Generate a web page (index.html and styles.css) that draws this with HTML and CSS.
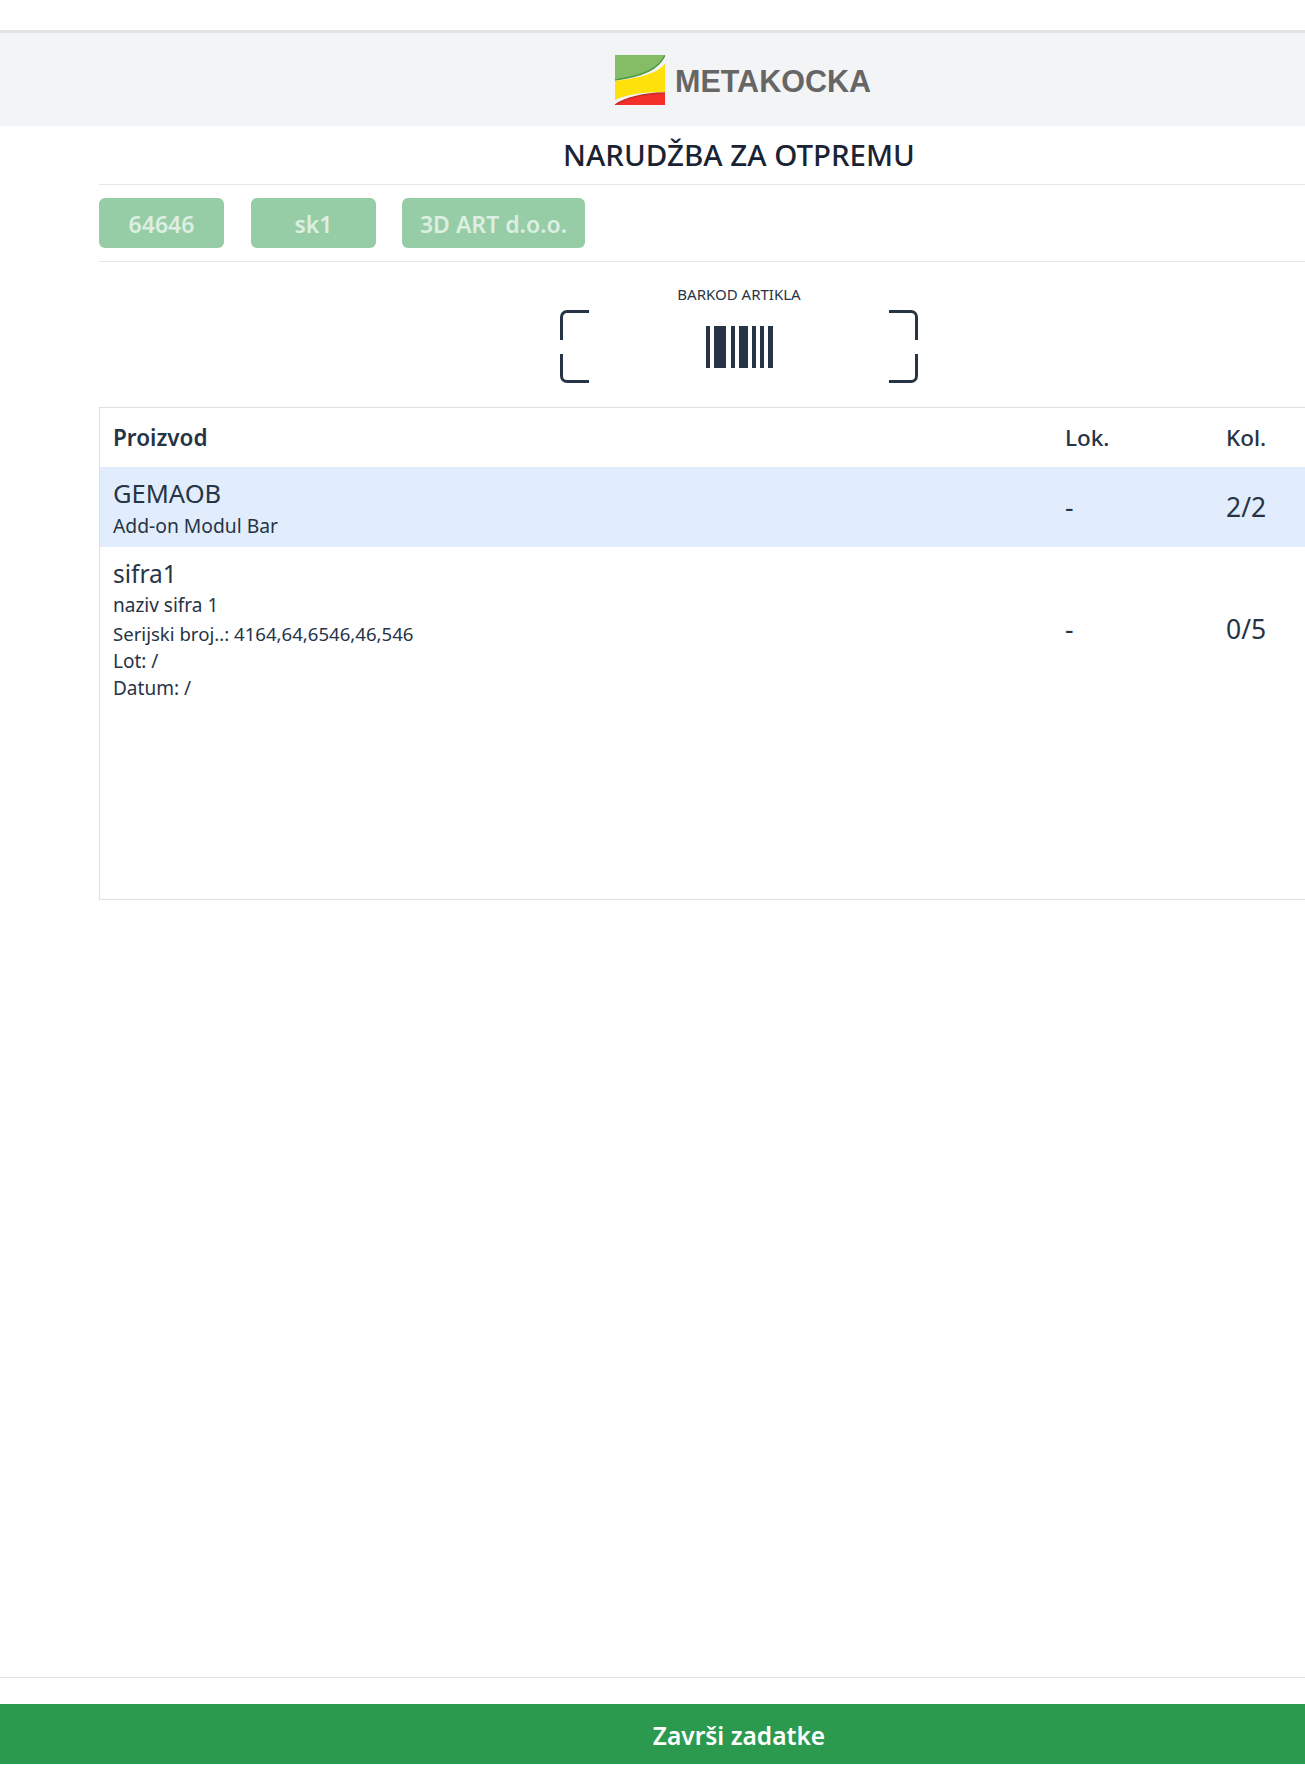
FILE: index.html
```html
<!DOCTYPE html>
<html lang="en">
<head>
    <meta charset="UTF-8">
    <meta name="viewport" content="width=device-width, initial-scale=1.0">
    <title>Narudžba za otpremu</title>
    <link rel="stylesheet" href="styles.css">
</head>
<body>
    <div class="frame">
        <div class="page">
            <header class="top-bar">
                <div class="brand">
                    <svg class="brand-logo" viewBox="0 0 50 50" aria-hidden="true">
                        <path d="M0 0H50C44 14 28 21 0 25V0Z" fill="#85bd67"/>
                        <path d="M50 0C44 14 28 21 0 25" fill="none" stroke="#4f9a45" stroke-width="1.4"/>
                        <path d="M50 8.5V37C26 37 10 40 0 45V26C30 22 44 17 50 8.5Z" fill="#fee00b"/>
                        <path d="M50 38V50H0C12 42 30 38.5 50 38Z" fill="#f22f28"/>
                        <path d="M50 38C30 38.5 12 42 0 50" fill="none" stroke="#c42a28" stroke-width="1.4"/>
                    </svg>
                    <span class="brand-name">METAKOCKA</span>
                </div>
            </header>

            <main class="content">
                <h1 class="title">NARUDŽBA ZA OTPREMU</h1>

                <div class="chips">
                    <span class="chip chip-a">64646</span>
                    <span class="chip chip-b">sk1</span>
                    <span class="chip chip-c">3D ART d.o.o.</span>
                </div>

                <div class="scan">
                    <div class="scan-label">BARKOD ARTIKLA</div>
                    <svg class="scan-frame" viewBox="0 0 358 73" aria-hidden="true">
                        <g fill="none" stroke="#263446" stroke-width="3">
                            <path d="M29 1.5H7A5.5 5.5 0 0 0 1.5 7V30"/>
                            <path d="M1.5 44V66A5.5 5.5 0 0 0 7 71.5H29"/>
                            <path d="M329 1.5H351A5.5 5.5 0 0 1 356.5 7V30"/>
                            <path d="M356.5 44V66A5.5 5.5 0 0 1 351 71.5H329"/>
                        </g>
                        <g fill="#263446">
                            <rect x="146" y="16" width="4" height="42"/>
                            <rect x="154" y="16" width="12" height="42"/>
                            <rect x="171" y="16" width="4" height="42"/>
                            <rect x="179" y="16" width="9" height="42"/>
                            <rect x="192" y="16" width="4" height="42"/>
                            <rect x="200" y="16" width="4" height="42"/>
                            <rect x="208" y="16" width="5" height="42"/>
                        </g>
                    </svg>
                </div>

                <div class="items">
                    <table class="items-table">
                        <thead>
                            <tr>
                                <th class="col-name">Proizvod</th>
                                <th class="col-loc">Lok.</th>
                                <th class="col-qty">Kol.</th>
                            </tr>
                        </thead>
                        <tbody>
                            <tr class="row-done">
                                <td>
                                    <div class="item-code">GEMAOB</div>
                                    <div class="item-line item-first">Add-on Modul Bar</div>
                                </td>
                                <td class="cell-big">-</td>
                                <td class="cell-big">2/2</td>
                            </tr>
                            <tr>
                                <td>
                                    <div class="item-code item-code-lower">sifra1</div>
                                    <div class="item-line">naziv sifra 1</div>
                                    <div class="item-line item-serial">Serijski broj..: 4164,64,6546,46,546</div>
                                    <div class="item-line">Lot: /</div>
                                    <div class="item-line">Datum: /</div>
                                </td>
                                <td class="cell-big">-</td>
                                <td class="cell-big">0/5</td>
                            </tr>
                        </tbody>
                    </table>
                </div>
            </main>

            <footer class="bottom">
                <button class="finish">Završi zadatke</button>
            </footer>
        </div>
    </div>
</body>
</html>
```

FILE: styles.css
```css
html, body {
    margin: 0;
    padding: 0;
}

body {
    font-family: "Noto Sans", "Open Sans", sans-serif;
    color: #263446;
    background-color: #fff;
}

/* the page is wider than the window, only the left part shows */
.frame {
    width: 1305px;
    height: 1773px;
    overflow: hidden;
}

.page {
    width: 1478px;
    height: 1773px;
    display: flex;
    flex-direction: column;
    padding-top: 30px;
    box-sizing: border-box;
}

.top-bar {
    height: 93px;
    background-color: #f3f4f6;
    border-top: 3px solid #e2e3e1;
    display: flex;
    justify-content: center;
    align-items: center;
}

.brand {
    display: flex;
    align-items: center;
    gap: 10px;
    margin-left: 8px;
}

.brand-logo {
    width: 50px;
    height: 50px;
    display: block;
}

.brand-name {
    font-family: "Liberation Sans", Arial, sans-serif;
    font-size: 30.5px;
    line-height: 36px;
    padding-top: 2px;
    font-weight: bold;
    color: #666665;
}

.content {
    flex-grow: 1;
    width: 1280px;
    margin-left: 99px;
}

.title {
    margin: 0;
    height: 59px;
    line-height: 57px;
    box-sizing: border-box;
    border-bottom: 1px solid #e5e7eb;
    text-align: center;
    font-size: 29.5px;
    font-weight: 500;
    color: #1a2334;
}

.chips {
    display: flex;
    height: 77px;
    box-sizing: border-box;
    padding-top: 13px;
    border-bottom: 1px solid #e5e7eb;
}

.chip {
    height: 50px;
    line-height: 53px;
    border-radius: 6px;
    background-color: #97cda6;
    color: #dcefe2;
    font-size: 23px;
    font-weight: 600;
    text-align: center;
}

.chip-a {
    width: 125px;
    margin-right: 27px;
}

.chip-b {
    width: 125px;
    margin-right: 26px;
}

.chip-c {
    width: 183px;
}

.scan {
    display: flex;
    flex-direction: column;
    align-items: center;
    padding-top: 21.5px;
    height: 145px;
    box-sizing: border-box;
}

.scan-label {
    font-size: 15px;
    line-height: 20px;
    margin-bottom: 6.5px;
}

.scan-frame {
    width: 358px;
    height: 73px;
    display: block;
}

.items {
    height: 493px;
    box-sizing: border-box;
    border: 1px solid #dfdfdf;
    border-right: none;
}

.items-table {
    width: 100%;
    border-collapse: collapse;
    table-layout: fixed;
}

.items-table th {
    height: 59px;
    padding: 0 13px;
    text-align: left;
    font-size: 22.5px;
    font-weight: 500;
}

.items-table .col-name {
    width: 926px;
    font-weight: 600;
}

.items-table .col-loc {
    width: 135px;
}

.items-table td {
    padding: 8px 13px 7.5px;
    vertical-align: top;
}

.items-table td.cell-big {
    vertical-align: middle;
    font-size: 26.5px;
}

.row-done {
    background-color: #e1edfc;
}

.item-code {
    font-size: 25.5px;
    line-height: 37px;
}

.item-code-lower {
    font-size: 24.5px;
}

.item-line {
    font-size: 19px;
    line-height: 27.7px;
}

.item-first {
    font-size: 19.3px;
}

.item-serial {
    font-size: 18.6px;
}

.bottom {
    border-top: 1px solid #dfdfdf;
    padding-top: 26px;
    padding-bottom: 9px;
}

.finish {
    display: block;
    width: 100%;
    height: 60px;
    border: none;
    padding-top: 4px;
    background-color: #2b9a4e;
    color: #fff;
    font-family: inherit;
    font-size: 24.5px;
    font-weight: 600;
}
```
